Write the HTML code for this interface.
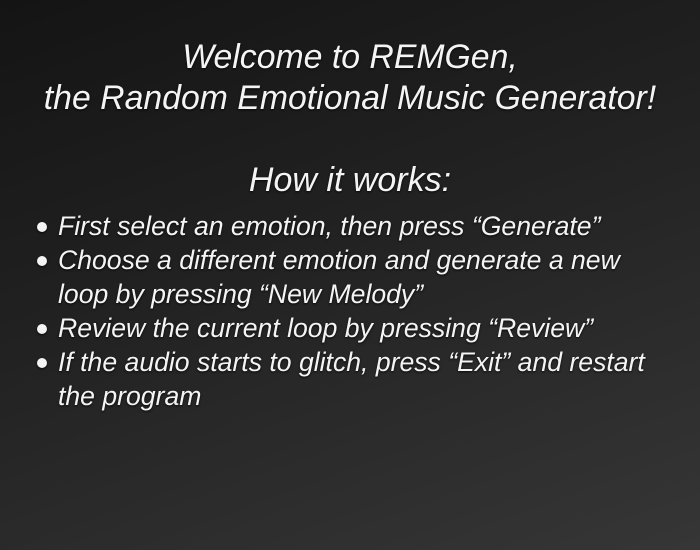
<!DOCTYPE html>
<html><head><style>
html,body{margin:0;padding:0}
body{width:700px;height:550px;overflow:hidden;background:linear-gradient(160deg,#141414 0%,#222 45%,#363636 100%);font-family:"Liberation Sans",sans-serif;font-style:italic;color:#f4f4f4;text-shadow:0 1px 2px rgba(0,0,0,.8);position:relative}
.t{position:absolute;left:0;width:700px;text-align:center;font-size:33.8px;white-space:nowrap}
.b{position:absolute;left:58px;font-size:26.6px;white-space:nowrap}
.d{position:absolute;left:37px;width:10px;height:10px;border-radius:50%;background:#f4f4f4;box-shadow:0 1px 2px rgba(0,0,0,.8)}
</style></head><body>
<div class="t" style="top:38px">Welcome to REMGen,</div>
<div class="t" style="top:79px">the Random Emotional Music Generator!</div>
<div class="t" style="top:161px;font-size:34px">How it works:</div>
<div class="d" style="top:222px"></div><div class="b" style="top:211px">First select an emotion, then press “Generate”</div>
<div class="d" style="top:256px"></div><div class="b" style="top:245px">Choose a different emotion and generate a new</div>
<div class="b" style="top:279px">loop by pressing “New Melody”</div>
<div class="d" style="top:324px"></div><div class="b" style="top:313px">Review the current loop by pressing “Review”</div>
<div class="d" style="top:358px"></div><div class="b" style="top:347px">If the audio starts to glitch, press “Exit” and restart</div>
<div class="b" style="top:381px">the program</div>
</body></html>
